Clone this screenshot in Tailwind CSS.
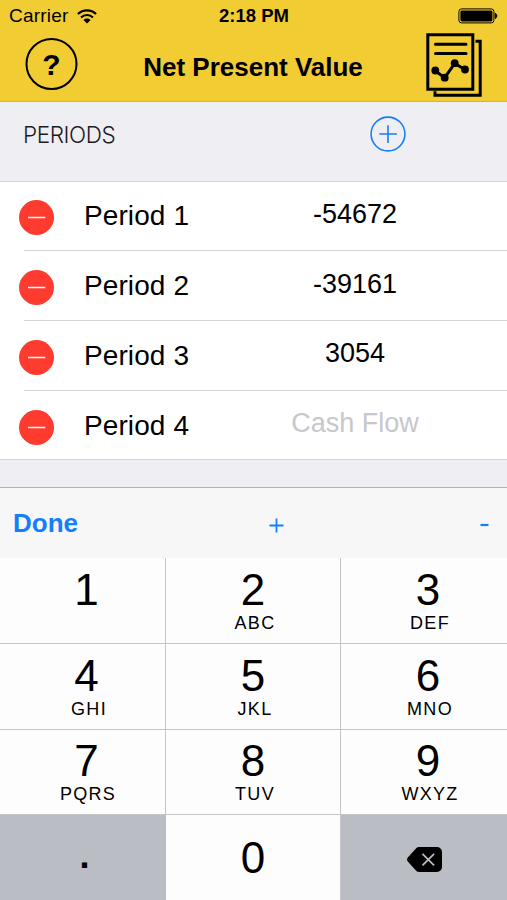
<!DOCTYPE html>
<html lang="en">
<head>
    <meta charset="UTF-8">
    <meta name="viewport" content="width=device-width, initial-scale=1.0">
    <title>Net Present Value</title>
    <script src="https://cdn.jsdelivr.net/npm/@tailwindcss/browser@4"></script>
</head>
<body class="bg-[#efeef3] text-black font-['Liberation_Sans',Arial,sans-serif]">
    <div class="w-[507px] h-[900px] flex flex-col overflow-hidden">
        <!-- Header -->
        <header class="h-[102px] bg-[#f2cc33] border-b border-[#c9b262] shrink-0">
            <!-- Status bar -->
            <div class="h-8 grid grid-cols-3 items-center pl-[9px] pr-[9px]">
                <div class="flex items-center gap-[9px]">
                    <span class="text-[19px] leading-8 tracking-[0.2px]">Carrier</span>
                    <svg class="w-5 h-[15px]" viewBox="0 0 20 15" fill="none" stroke="#000" stroke-width="2.1">
                        <path d="M.9 5.1a13 13 0 0 1 18.2 0M4 8.5a8.6 8.6 0 0 1 12 0"/>
                        <path d="M6.4 11a5.2 5.2 0 0 1 7.2 0L10 14.5z" fill="#000" stroke="none"/>
                    </svg>
                </div>
                <div class="text-center text-[18.5px] leading-8 font-bold pl-px">2:18 PM</div>
                <svg class="w-10 h-4 justify-self-end" viewBox="0 0 40 16">
                    <rect x=".9" y=".9" width="35" height="14" rx="2.6" fill="none" stroke="#000" stroke-width="1"/>
                    <rect x="2.4" y="2.4" width="32" height="11" rx="1.4"/>
                    <path d="M37.2 5.2a3 3 0 0 1 0 5.4z" stroke="#000"/>
                </svg>
            </div>
            <!-- Title bar -->
            <div class="h-[70px] flex items-start pl-[25px] pr-[25px]">
                <svg class="w-[53px] h-[53px] mt-[6px] shrink-0" viewBox="0 0 53 53">
                    <circle cx="26.5" cy="26" r="25" fill="none" stroke="#000" stroke-width="2"/>
                    <text x="26.5" y="37" text-anchor="middle" font-size="30" font-weight="bold">?</text>
                </svg>
                <h1 class="flex-1 text-center text-[26px] leading-[30px] font-bold mt-[20px] pl-[2px]">Net Present Value</h1>
                <svg class="w-14 h-[64px] mt-[1px] shrink-0" viewBox="0 0 56 64" fill="none" stroke="#000" stroke-width="3">
                    <path d="M1.8 1.8h45v54.5h-45zM49.5 8.3h4.7v54h-45.2v-4.1"/>
                    <path d="M9.5 11.2h30.5M9.5 20.6h30.5" stroke-linecap="round"/>
                    <path d="M9 37.7L18.7 44.7L28.7 30.5L39 36.5"/>
                    <g fill="#000" stroke="none">
                        <circle cx="9.3" cy="37.5" r="3.9"/>
                        <circle cx="18.7" cy="44.7" r="3.9"/>
                        <circle cx="28.7" cy="30.2" r="3.9"/>
                        <circle cx="39" cy="36.5" r="3.9"/>
                    </g>
                </svg>
            </div>
        </header>

        <!-- Section heading -->
        <div class="h-20 shrink-0 flex items-start border-b border-[#d3d3d7] pl-6">
            <h2 class="w-[346px] text-[22.5px] leading-[26px] tracking-[-0.4px] font-light font-[Inter,'Liberation_Sans',sans-serif] -ml-px mr-px mt-[20px] text-[#1c1c1f]">PERIODS</h2>
            <svg class="w-9 h-9 mt-[14px]" viewBox="0 0 36 36" fill="none" stroke="#147efb" stroke-width="1.6">
                <circle cx="18" cy="18" r="16.9"/>
                <path d="M18 9.3v17.6M9.3 18h17.6"/>
            </svg>
        </div>

        <!-- Periods -->
        <ul class="h-[278px] shrink-0 bg-white border-b border-[#d3d3d7]">
            <li class="h-[69px] flex pl-[19px]">
                <svg class="w-[35px] h-[35px] mt-[18px]" viewBox="0 0 35 35"><circle cx="17.5" cy="17.5" r="17.5" fill="#ff3b30"/><path d="M9 17.5h17.3" stroke="#fff" stroke-width="1.5"/></svg>
                <span class="w-[187px] pl-[30px] text-[28px] leading-8 mt-[18px] tracking-[0.1px]">Period 1</span>
                <span class="w-[228px] text-center text-[27px] leading-8 mt-[16px]">-54672</span>
            </li>
            <li class="h-[70px] flex pl-[19px] relative">
                <div class="absolute left-6 right-0 top-[-1px] h-px bg-[#d3d3d7]"></div>
                <svg class="w-[35px] h-[35px] mt-[19px]" viewBox="0 0 35 35"><circle cx="17.5" cy="17.5" r="17.5" fill="#ff3b30"/><path d="M9 17.5h17.3" stroke="#fff" stroke-width="1.5"/></svg>
                <span class="w-[187px] pl-[30px] text-[28px] leading-8 mt-[19px] tracking-[0.1px]">Period 2</span>
                <span class="w-[228px] text-center text-[27px] leading-8 mt-[17px]">-39161</span>
            </li>
            <li class="h-[70px] flex pl-[19px] relative">
                <div class="absolute left-6 right-0 top-[-1px] h-px bg-[#d3d3d7]"></div>
                <svg class="w-[35px] h-[35px] mt-[19px]" viewBox="0 0 35 35"><circle cx="17.5" cy="17.5" r="17.5" fill="#ff3b30"/><path d="M9 17.5h17.3" stroke="#fff" stroke-width="1.5"/></svg>
                <span class="w-[187px] pl-[30px] text-[28px] leading-8 mt-[19px] tracking-[0.1px]">Period 3</span>
                <span class="w-[228px] text-center text-[27px] leading-8 mt-[16px]">3054</span>
            </li>
            <li class="h-[69px] flex pl-[19px] relative">
                <div class="absolute left-6 right-0 top-[-1px] h-px bg-[#d3d3d7]"></div>
                <svg class="w-[35px] h-[35px] mt-[19px]" viewBox="0 0 35 35"><circle cx="17.5" cy="17.5" r="17.5" fill="#ff3b30"/><path d="M9 17.5h17.3" stroke="#fff" stroke-width="1.5"/></svg>
                <span class="w-[187px] pl-[30px] text-[28px] leading-8 mt-[19px] tracking-[0.1px]">Period 4</span>
                <span class="w-[228px] text-center text-[27px] leading-8 mt-[16px] text-[#c7c7cc]">Cash Flow</span>
            </li>
        </ul>

        <!-- Keyboard toolbar -->
        <div class="mt-[27px] h-[71px] shrink-0 bg-[#f7f7f8] border-t border-[#b0b0b5] flex items-center pl-[13px] pr-[18px] text-[#147efb]">
            <button class="text-[26px] leading-8 font-bold w-[256px] text-left">Done</button>
            <svg class="w-[15px] h-[15px] mt-[4px]" viewBox="0 0 15 15" stroke="#147efb" stroke-width="1.8"><path d="M7.5 .5v14M.5 7.5h14"/></svg>
            <svg class="w-[9px] h-[4px] mt-[3px] ml-auto" viewBox="0 0 9 4" stroke="#147efb" stroke-width="2.2"><path d="M.5 2h8"/></svg>
        </div>

        <!-- Number pad -->
        <div class="flex-1 grid grid-cols-[166px_175px_166px] grid-rows-[86px_86px_85px_85px] bg-[#fdfdfd] text-center">
            <div class="border-r border-b border-[#c3c6c9] pt-[10px] pl-[8px]">
                <div class="text-[44px] leading-[44px]">1</div>
            </div>
            <div class="border-r border-b border-[#c3c6c9] pt-[10px]">
                <div class="text-[44px] leading-[44px]">2</div>
                <div class="text-[18px] leading-[22px] tracking-[1.3px] pl-[4px]">ABC</div>
            </div>
            <div class="border-b border-[#c3c6c9] pt-[10px] pl-[8px]">
                <div class="text-[44px] leading-[44px]">3</div>
                <div class="text-[18px] leading-[22px] tracking-[1.3px] pl-[4px]">DEF</div>
            </div>
            <div class="border-r border-b border-[#c3c6c9] pt-[10px] pl-[8px]">
                <div class="text-[44px] leading-[44px]">4</div>
                <div class="text-[18px] leading-[22px] tracking-[1.3px] pl-[5px]">GHI</div>
            </div>
            <div class="border-r border-b border-[#c3c6c9] pt-[10px]">
                <div class="text-[44px] leading-[44px]">5</div>
                <div class="text-[18px] leading-[22px] tracking-[1.3px] pl-[4px]">JKL</div>
            </div>
            <div class="border-b border-[#c3c6c9] pt-[10px] pl-[8px]">
                <div class="text-[44px] leading-[44px]">6</div>
                <div class="text-[18px] leading-[22px] tracking-[1.3px] pl-[4px]">MNO</div>
            </div>
            <div class="border-r border-b border-[#c3c6c9] pt-[9px] pl-[8px]">
                <div class="text-[44px] leading-[44px]">7</div>
                <div class="text-[18px] leading-[22px] tracking-[1.3px] pl-[3px]">PQRS</div>
            </div>
            <div class="border-r border-b border-[#c3c6c9] pt-[9px]">
                <div class="text-[44px] leading-[44px]">8</div>
                <div class="text-[18px] leading-[22px] tracking-[1.3px] pl-[4px]">TUV</div>
            </div>
            <div class="border-b border-[#c3c6c9] pt-[9px] pl-[8px]">
                <div class="text-[44px] leading-[44px]">9</div>
                <div class="text-[18px] leading-[22px] tracking-[1.3px] pl-[4px]">WXYZ</div>
            </div>
            <div class="bg-[#babdc4] pt-[19px] pl-[3px]">
                <div class="text-[36px] leading-[44px] font-bold">.</div>
            </div>
            <div class="border-r border-[#c3c6c9] pt-[21px]">
                <div class="text-[44px] leading-[44px]">0</div>
            </div>
            <div class="bg-[#babdc4] flex justify-center pt-[32px] pl-px">
                <svg class="w-[35px] h-[25px]" viewBox="0 0 35 25">
                    <path d="M12 0h18a5 5 0 0 1 5 5v15a5 5 0 0 1-5 5h-18q-1.5 0-2.6-1l-8.6-9.6q-1.5-1.9 0-3.8l8.6-9.6q1.1-1 2.6-1z"/>
                    <path d="M15.5 6.8l11.6 11.6M27.1 6.8l-11.6 11.6" stroke="#babdc4" stroke-width="1.7"/>
                </svg>
            </div>
        </div>
    </div>
</body>
</html>
